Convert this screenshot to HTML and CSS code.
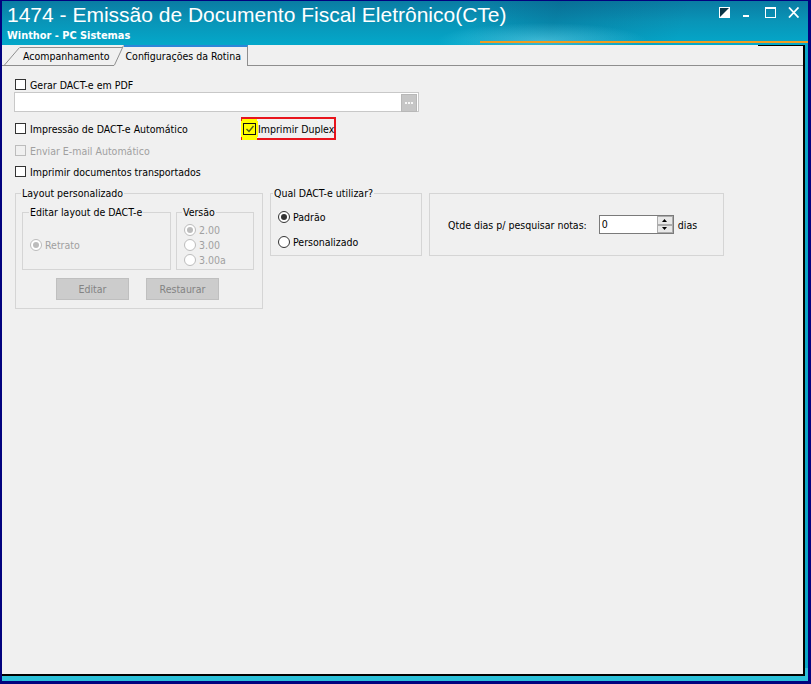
FILE: index.html
```html
<!DOCTYPE html>
<html lang="pt-BR">
<head>
    <meta charset="UTF-8">
    <title>1474 - Emissão de Documento Fiscal Eletrônico(CTe)</title>
    <link rel="stylesheet" href="styles.css">
</head>
<body>
<div class="window">
    <div class="titlebar">
        <div class="caption">
            <div class="caption-title">1474 - Emissão de Documento Fiscal Eletrônico(CTe)</div>
            <div class="caption-sub">Winthor - PC Sistemas</div>
        </div>
        <div class="caption-buttons">
            <svg width="12" height="11" viewBox="0 0 12 11">
                <rect x="0.5" y="0.5" width="10" height="10" fill="#0b3546" stroke="#fff"/>
                <path d="M0 11 L11 0 L11 11 Z" fill="#fff"/>
            </svg>
            <svg width="12" height="11" viewBox="0 0 12 11">
                <rect x="1" y="8" width="6" height="2" fill="#fff"/>
            </svg>
            <svg width="12" height="11" viewBox="0 0 12 11">
                <rect x="0.5" y="0.5" width="10" height="10" fill="none" stroke="#fff"/>
                <rect x="0" y="0" width="11" height="2" fill="#fff"/>
            </svg>
            <svg width="12" height="11" viewBox="0 0 12 11">
                <path d="M1 0.5 L10.5 10.5 M10.5 0.5 L1 10.5" stroke="#fff" stroke-width="1.8"/>
            </svg>
        </div>
    </div>

    <div class="client">
        <div class="panel">
            <div class="tabstrip">
                <div class="tab">
                    <svg class="tab-edge" width="16" height="18" viewBox="0 0 16 18">
                        <path d="M0.5 18 L15.5 0.5" stroke="#8e8e8e" fill="none"/>
                    </svg>
                    <span class="tab-label">Acompanhamento</span>
                </div>
                <div class="tab tab-active">
                    <svg class="tab-edge" width="10" height="21" viewBox="0 0 10 21">
                        <path d="M0 21 L9.5 0.5 L10 0.5 L10 21 Z" fill="#f0f0f0"/>
                        <path d="M0.5 20 L9.5 0.5" stroke="#8e8e8e" fill="none"/>
                    </svg>
                    <span class="tab-label">Configurações da Rotina</span>
                </div>
                <div class="tab-fill"></div>
            </div>

            <div class="page">
                <div class="opt opt-first"><span class="check"></span>Gerar DACT-e em PDF</div>
                <div class="path-field"><span class="path-btn"><i></i><i></i><i></i></span></div>

                <div class="opt-row">
                    <div class="opt opt-wide"><span class="check"></span>Impressão de DACT-e Automático</div>
                    <div class="opt opt-marked">
                        <span class="check check-on">
                            <svg width="10" height="10" viewBox="0 0 10 10">
                                <path d="M1.5 5 L4 7.5 L8.5 2" stroke="#4d5a14" stroke-width="1.4" fill="none"/>
                            </svg>
                        </span>Imprimir Duplex
                    </div>
                </div>
                <div class="opt opt-disabled"><span class="check"></span>Enviar E-mail Automático</div>
                <div class="opt"><span class="check"></span>Imprimir documentos transportados</div>

                <div class="groups">
                    <fieldset class="group group-layout">
                        <legend>Layout personalizado</legend>
                        <div class="subgroups">
                            <fieldset class="group group-edit">
                                <legend>Editar layout de DACT-e</legend>
                                <div class="radio-list edit-list">
                                    <div class="radio radio-disabled"><span class="dot dot-on"></span>Retrato</div>
                                </div>
                            </fieldset>
                            <fieldset class="group group-version">
                                <legend>Versão</legend>
                                <div class="radio-list version-list">
                                    <div class="radio radio-disabled"><span class="dot dot-on"></span>2.00</div>
                                    <div class="radio radio-disabled"><span class="dot"></span>3.00</div>
                                    <div class="radio radio-disabled"><span class="dot"></span>3.00a</div>
                                </div>
                            </fieldset>
                        </div>
                        <div class="actions">
                            <button class="btn" disabled>Editar</button>
                            <button class="btn" disabled>Restaurar</button>
                        </div>
                    </fieldset>

                    <fieldset class="group group-which">
                        <legend>Qual DACT-e utilizar?</legend>
                        <div class="radio-list which-list">
                            <div class="radio"><span class="dot dot-on"></span>Padrão</div>
                            <div class="radio"><span class="dot"></span>Personalizado</div>
                        </div>
                    </fieldset>

                    <div class="days-box">
                        <span>Qtde dias p/ pesquisar notas:</span>
                        <div class="spin">
                            <span class="spin-value">0</span>
                            <span class="spin-btns">
                                <span class="spin-btn"><svg width="5" height="3" viewBox="0 0 5 3"><path d="M0 3 L2.5 0 L5 3 Z" fill="#000"/></svg></span>
                                <span class="spin-btn"><svg width="5" height="3" viewBox="0 0 5 3"><path d="M0 0 L5 0 L2.5 3 Z" fill="#000"/></svg></span>
                            </span>
                        </div>
                        <span class="days-unit">dias</span>
                    </div>
                </div>
            </div>
        </div>
    </div>
</div>
</body>
</html>
```

FILE: styles.css
```css
body {
    margin: 0;
    background-color: #02027e;
    color: #000;
    font-family: "DejaVu Sans Condensed", "DejaVu Sans", sans-serif;
    font-stretch: condensed;
    font-size: 10.5px;
}

.window {
    width: 811px;
    height: 684px;
    box-sizing: border-box;
    padding: 1px 3px 3px 2px;
    display: flex;
    flex-direction: column;
}

/* caption bar */
.titlebar {
    flex: none;
    height: 44px;
    display: flex;
    justify-content: space-between;
    background:
        linear-gradient(#f29b1f, #f29b1f) 478px 40px / 328px 2px no-repeat,
        radial-gradient(ellipse 150px 26px at 540px 40px, rgba(130, 230, 250, 0.45), transparent 70%),
        linear-gradient(110deg, transparent 58%, rgba(0, 40, 80, 0.16) 68%, transparent 84%),
        linear-gradient(180deg, #0a7ca3 0%, #0994b7 45%, #04a8ca 100%);
}

.caption {
    padding: 2px 0 0 5px;
    color: #fff;
}

.caption-title {
    font-family: "Liberation Sans", sans-serif;
    font-stretch: normal;
    font-size: 21px;
    line-height: 24px;
}

.caption-sub {
    margin-top: 3px;
    font-family: "DejaVu Sans", sans-serif;
    font-stretch: normal;
    font-weight: bold;
    font-size: 9.8px;
    line-height: 12px;
}

.caption-buttons {
    display: flex;
    gap: 11px;
    padding: 6px 8px 0 0;
}

/* teal frame round the client area */
.client {
    flex: 1;
    display: flex;
    padding: 0 3px 5px 0;
    background: linear-gradient(180deg, #0aa6c4 0%, #0aa6c4 98%, #2cc0d8 98%);
}

.panel {
    flex: 1;
    display: flex;
    flex-direction: column;
    background-color: #f0f0f0;
    border-right: 2px solid #000;
    border-bottom: 2px solid #000;
}

/* tabs */
.tabstrip {
    height: 20px;
    display: flex;
    align-items: flex-end;
    padding-left: 2px;
    border-bottom: 1px solid #8e8e8e;
}

.tab {
    display: flex;
    align-items: flex-end;
}

.tab-edge {
    display: block;
}

.tab-label {
    height: 17px;
    line-height: 17px;
    border-top: 1px solid #8e8e8e;
    padding: 0 13px 0 3px;
    white-space: nowrap;
}

.tab-active {
    margin-left: -9px;
    margin-bottom: -1px;
}

.tab-active .tab-label {
    height: 18px;
    line-height: 17px;
    padding: 1px 6px 0 2px;
    border-top: 2px solid #2d86d8;
    border-right: 1px solid #8e8e8e;
    background-color: #f0f0f0;
}

.tab-fill {
    align-self: flex-start;
    margin-left: auto;
    width: 45px;
    border-top: 1px solid #000;
}

/* page content */
.page {
    padding: 11px 0 0 12px;
}

.opt {
    height: 21px;
    display: flex;
    align-items: center;
    padding-left: 1px;
    white-space: nowrap;
}

.opt-first {
    height: 15px;
}

.opt-disabled {
    color: #a0a0a0;
}

.opt-disabled .check {
    border-color: #bcbcbc;
    background-color: #f0f0f0;
}

.check {
    width: 11px;
    height: 11px;
    box-sizing: border-box;
    border: 1px solid #333;
    background-color: #fff;
    margin-right: 4px;
    flex: none;
    display: flex;
    align-items: center;
    justify-content: center;
}

.path-field {
    width: 405px;
    height: 20px;
    box-sizing: border-box;
    border: 1px solid #c8c8c8;
    background-color: #fff;
    display: flex;
    justify-content: flex-end;
    padding: 1px;
}

.path-btn {
    width: 14px;
    height: 16px;
    background-color: #c6c6c6;
    border: 1px solid #b8b8b8;
    display: flex;
    align-items: center;
    justify-content: center;
    gap: 1px;
}

.path-btn i {
    width: 2px;
    height: 2px;
    background-color: #f6f6f6;
}

.opt-row {
    display: flex;
    align-items: center;
    height: 23px;
    margin-top: 5px;
}

.opt-wide {
    width: 226px;
}

/* highlighted option */
.opt-marked {
    height: 23px;
    box-sizing: border-box;
    border: 2px solid #e8141c;
    padding: 0;
}

.check-on {
    width: 13px;
    height: 12px;
    margin-right: 2px;
    border-color: #111;
    background-color: #ffff00;
    box-shadow: 0 0 0 2px #ffff00, 0 -3px 0 1px #ffff00, 0 4px 0 1px #ffff00;
}

/* group boxes */
.groups {
    display: flex;
    align-items: flex-start;
    gap: 7px;
    margin-top: 4px;
    padding-left: 1px;
}

.group {
    margin: 0;
    padding: 0;
    min-width: 0;
    border: 1px solid #d5d5d5;
    box-sizing: border-box;
}

.group legend {
    margin-left: 5px;
    padding: 0 1px;
    line-height: 14px;
}

.group-layout {
    width: 248px;
}

.subgroups {
    display: flex;
    gap: 5px;
    margin-top: 5px;
    padding-left: 6px;
}

.group-edit {
    width: 149px;
    height: 65px;
}

.group-edit legend {
    margin-left: 6px;
}

.group-version {
    width: 78px;
    height: 65px;
}

.radio-list {
    display: flex;
    flex-direction: column;
}

.edit-list {
    padding: 18px 0 0 7px;
}

.version-list {
    padding: 3px 0 0 7px;
}

.radio {
    height: 15px;
    display: flex;
    align-items: center;
    white-space: nowrap;
}

.dot {
    width: 12px;
    height: 12px;
    box-sizing: border-box;
    border: 1px solid #333;
    border-radius: 50%;
    background-color: #fff;
    margin-right: 3px;
    flex: none;
    display: flex;
    align-items: center;
    justify-content: center;
}

.dot-on::after {
    content: "";
    width: 6px;
    height: 6px;
    border-radius: 50%;
    background-color: #333;
}

.radio-disabled {
    color: #a0a0a0;
}

.radio-disabled .dot {
    border-color: #bcbcbc;
}

.radio-disabled .dot-on::after {
    background-color: #bcbcbc;
}

.actions {
    display: flex;
    gap: 17px;
    margin-top: 8px;
    padding: 0 0 8px 40px;
}

.btn {
    width: 73px;
    height: 22px;
    padding: 0;
    border: 1px solid #bfbfbf;
    background-color: #cccccc;
    color: #838383;
    font: inherit;
}

.group-which {
    width: 152px;
    height: 70px;
}

.group-which legend {
    margin-left: 2px;
}

.which-list {
    padding: 4px 0 0 7px;
}

.which-list .radio {
    height: 25px;
}

/* days field */
.days-box {
    width: 295px;
    height: 63px;
    box-sizing: border-box;
    margin-top: 7px;
    border: 1px solid #d5d5d5;
    display: flex;
    align-items: center;
    padding-left: 18px;
    white-space: nowrap;
}

.spin {
    width: 75px;
    height: 19px;
    box-sizing: border-box;
    margin-left: 12px;
    border: 1px solid #7a7a7a;
    background-color: #fff;
    display: flex;
    justify-content: space-between;
}

.spin-value {
    padding-left: 2px;
    line-height: 17px;
}

.spin-btns {
    width: 16px;
    display: flex;
    flex-direction: column;
}

.spin-btn {
    flex: 1;
    box-sizing: border-box;
    border: 1px solid #acacac;
    background-color: #e8e8e8;
    display: flex;
    align-items: center;
    justify-content: center;
}

.spin-btn svg {
    display: block;
}

.days-unit {
    margin-left: 4px;
}
```
